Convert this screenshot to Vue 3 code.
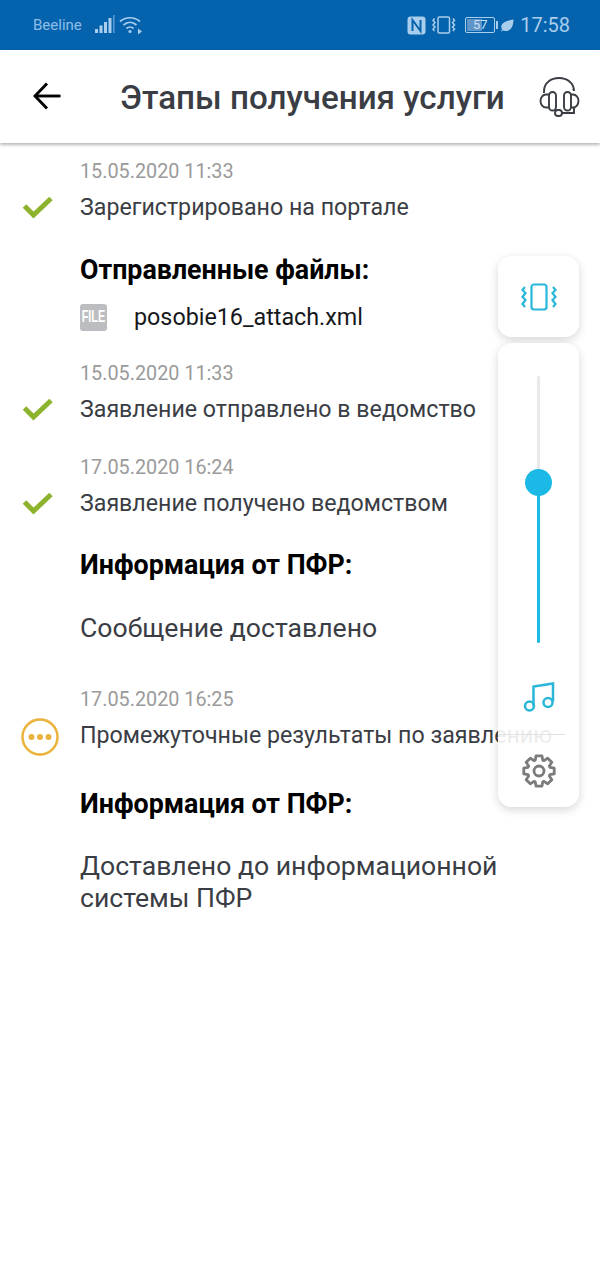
<script setup>
// Этапы получения услуги
const stagesFirst = [
  { date: '15.05.2020 11:33', text: 'Заявление отправлено в ведомство' },
  { date: '17.05.2020 16:24', text: 'Заявление получено ведомством' },
];

// шестерёнка с 8 зубцами
const gearPath = (() => {
  const pts = [];
  for (let i = 0; i < 8; i++) {
    const a = (i * Math.PI) / 4 - Math.PI / 2;
    const steps = [[-0.33, 11.5], [-0.19, 15.5], [0.19, 15.5], [0.33, 11.5]];
    for (const [d, r] of steps) {
      pts.push(`${(17 + r * Math.cos(a + d)).toFixed(2)} ${(17 + r * Math.sin(a + d)).toFixed(2)}`);
    }
  }
  return 'M' + pts.join('L') + 'Z';
})();
</script>

<template>
  <div class="page">
    <div class="statusbar">
      <div class="status-left">
        <span class="carrier">Beeline</span>
        <svg class="signal" width="20" height="20" viewBox="0 0 20 20">
          <rect x="0" y="14" width="3" height="4" fill="#a9cdec" />
          <rect x="4.5" y="10.5" width="3" height="7.5" fill="#a9cdec" />
          <rect x="9" y="7" width="3" height="11" fill="#a9cdec" />
          <rect x="13.5" y="3" width="3" height="15" fill="#a9cdec" />
          <rect x="18" y="0" width="1.5" height="18" fill="#5b9bd5" />
        </svg>
        <svg class="wifi" width="24" height="20" viewBox="0 0 24 20" fill="none" stroke="#a9cdec" stroke-width="1.7">
          <path d="M1 6.5C6.5 1.5 15.5 1.5 21 6.5" />
          <path d="M4.5 10C8.5 6.5 13.500 6.500 17.500 10" />
          <path d="M7.500 13.500C9.500 11.700 12.500 11.700 14.500 13.500" />
          <circle cx="11" cy="16.500" r="1.600" fill="#a9cdec" stroke="none" />
          <path d="M19 13.500L23 16.500L19 19.500Z" fill="#a9cdec" stroke="none" />
        </svg>
      </div>
      <div class="status-right">
        <svg width="19" height="19" viewBox="0 0 19 19">
          <rect x="0.500" y="0.500" width="18" height="18" rx="3" fill="#a9cdec" />
          <path d="M5.500 15V4L13.500 15V4" fill="none" stroke="#0563ad" stroke-width="2" />
        </svg>
        <svg class="vibrate" width="24" height="18" viewBox="0 0 24 18" fill="none" stroke="#a9cdec" stroke-width="1.500">
          <rect x="6" y="1" width="11.500" height="16" rx="1.500" />
          <path d="M2.500 2.500l-1.500 2 2 2-2 2.500 2 2-2 2 1.500 2" />
          <path d="M21 2.500l1.500 2-2 2 2 2.500-2 2 2 2-1.500 2" />
        </svg>
        <div class="battery">
          <div class="battery-body">
            <div class="battery-fill"></div>
            <span class="battery-text">57</span>
          </div>
          <div class="battery-cap"></div>
        </div>
        <svg class="leaf" width="13" height="13" viewBox="0 0 13 13">
          <path d="M12.500 0.500C12.500 7 10 12 4.500 12C3.300 12 2.400 11.700 1.800 11.200L0.800 12.500L0 12L1.100 10.500C0.300 9.500 0 8.300 0.500 6.500C1.500 3 6 1.500 12.500 0.500Z" fill="#a9cdec" />
        </svg>
        <span class="clock">17:58</span>
      </div>
    </div>

    <header class="topbar">
      <svg class="back" width="28" height="28" viewBox="0 0 28 28" fill="none" stroke="#000" stroke-width="2.900">
        <path d="M27.500 14H2" />
        <path d="M14 1.500L2 14L14 26.500" />
      </svg>
      <h1 class="title">Этапы получения услуги</h1>
      <svg class="support" width="42" height="42" viewBox="0 0 42 42" fill="none" stroke="#3a3d44" stroke-width="1.900">
        <path d="M5 16V14C5 6 12 1 20 1C28 1 35 6 35 14" />
        <circle cx="34" cy="12.500" r="0.700" fill="#3a3d44" stroke="none" />
        <path d="M10 17.500H7A5.500 6.500 0 0 0 7 30.500H10" />
        <rect x="10" y="15" width="7" height="18.500" rx="3.500" />
        <rect x="25" y="15" width="7" height="18.500" rx="3.500" />
        <path d="M32 17.500H34A5.500 6.500 0 0 1 34 30.500H32" />
        <path d="M35 30.500V36H23" />
        <rect x="16" y="33" width="7" height="6" rx="3" />
      </svg>
    </header>

    <main class="content">
      <section class="stage">
        <div class="date">15.05.2020 11:33</div>
        <div class="row">
          <svg class="check" width="32" height="24" viewBox="0 0 32 24" fill="none" stroke="#8db32d" stroke-width="5">
            <path d="M2.500 11L11.500 20L29 3.500" />
          </svg>
          <span class="status">Зарегистрировано на портале</span>
        </div>
      </section>

      <section class="block files">
        <h2 class="block-title">Отправленные файлы:</h2>
        <div class="file">
          <div class="file-icon"><span>FILE</span></div>
          <span class="file-name">posobie16_attach.xml</span>
        </div>
      </section>

      <section v-for="s in stagesFirst" :key="s.date" class="stage stage-next">
        <div class="date">{{ s.date }}</div>
        <div class="row">
          <svg class="check" width="32" height="24" viewBox="0 0 32 24" fill="none" stroke="#8db32d" stroke-width="5">
            <path d="M2.500 11L11.500 20L29 3.500" />
          </svg>
          <span class="status">{{ s.text }}</span>
        </div>
      </section>

      <section class="block info-one">
        <h2 class="block-title">Информация от ПФР:</h2>
        <p class="info-text">Сообщение доставлено</p>
      </section>

      <section class="stage stage-pending">
        <div class="date">17.05.2020 16:25</div>
        <div class="row">
          <svg class="pending" width="38" height="38" viewBox="0 0 38 38">
            <circle cx="19" cy="19" r="17.500" fill="none" stroke="#ebb33c" stroke-width="2.500" />
            <circle cx="10.500" cy="19" r="3" fill="#ebb33c" />
            <circle cx="19" cy="19" r="3" fill="#ebb33c" />
            <circle cx="27.500" cy="19" r="3" fill="#ebb33c" />
          </svg>
          <span class="status">Промежуточные результаты по заявлению</span>
        </div>
      </section>

      <section class="block info-two">
        <h2 class="block-title">Информация от ПФР:</h2>
        <p class="info-text">Доставлено до информационной системы ПФР</p>
      </section>
    </main>

    <!-- громкость: системная панель поверх экрана -->
    <aside class="volume">
      <div class="vol-card vol-mode">
        <svg width="36" height="28" viewBox="0 0 36 28" fill="none" stroke="#29b6d8" stroke-width="2.200">
          <rect x="10.500" y="1.500" width="15" height="25" rx="2.500" />
          <path d="M4 4l-2.500 3 3 3-3 4 3 3-3 4 2.500 3" />
          <path d="M32 4l2.500 3-3 3 3 4-3 3 3 4-2.500 3" />
        </svg>
      </div>
      <div class="vol-card vol-main">
        <div class="slider">
          <div class="track"></div>
          <div class="track-active"></div>
          <div class="thumb"></div>
        </div>
        <svg class="music" width="32" height="32" viewBox="0 0 32 32" fill="none" stroke="#29b6d8" stroke-width="2.500">
          <path d="M10.500 26V6.500L30 3.500V21.500" />
          <circle cx="6.500" cy="26" r="4.500" />
          <circle cx="25" cy="22.500" r="4.500" />
        </svg>
        <div class="vol-divider"></div>
        <svg class="gear" width="34" height="34" viewBox="0 0 34 34" fill="none" stroke="#7b7b7b" stroke-width="2.800" stroke-linejoin="round">
          <path :d="gearPath" />
          <circle cx="17" cy="17" r="5" />
        </svg>
      </div>
    </aside>
  </div>
</template>

<style>
html, body {
  margin: 0;
  background: #fff;
}
</style>

<style scoped>
.page {
  position: relative;
  width: 600px;
  height: 1266px;
  overflow: hidden;
  background: #fff;
  font-family: Roboto, "Noto Sans", sans-serif;
  color: #3a3d44;
}

.statusbar {
  height: 50px;
  background: #0563ad;
  display: flex;
  justify-content: space-between;
  align-items: center;
  padding: 0 30px 0 33px;
}

.status-left, .status-right {
  display: flex;
  align-items: center;
}

.carrier {
  font-size: 15px;
  color: #8fbde6;
  margin-right: 13px;
}

.signal {
  margin-right: 4px;
}

.status-right svg {
  flex: none;
}

.vibrate {
  margin-left: 6px;
}

.battery {
  display: flex;
  align-items: center;
  margin-left: 9px;
}

.battery-body {
  position: relative;
  width: 28px;
  height: 14px;
  border: 1px solid #a9cdec;
  border-radius: 2px;
}

.battery-fill {
  position: absolute;
  left: 1px;
  top: 1px;
  bottom: 1px;
  width: 15px;
  background: #5f95c9;
}

.battery-text {
  position: absolute;
  left: 0;
  right: 0;
  top: 0;
  text-align: center;
  font-size: 13px;
  line-height: 14px;
  color: #c9e0f4;
}

.battery-cap {
  width: 2px;
  height: 8px;
  margin-left: 1px;
  background: #a9cdec;
}

.leaf {
  margin-left: 3px;
}

.clock {
  font-size: 20px;
  color: #a9cdec;
  margin-left: 6px;
}

.topbar {
  height: 93px;
  box-sizing: border-box;
  display: flex;
  align-items: center;
  padding: 0 19px 0 33px;
  background: #fff;
  box-shadow: 0 2px 3px rgba(0, 0, 0, 0.28);
}

.back {
  flex: none;
  margin-top: -1px;
}

.title {
  flex: 1;
  margin: 2px 0 0 59px;
  font-size: 33.200px;
  font-weight: 500;
  color: #3a3d44;
  white-space: nowrap;
}

.support {
  flex: none;
  margin-top: 3px;
}

.content {
  padding-top: 16px;
}

.stage {
  padding-left: 80px;
}

.date {
  font-size: 19.800px;
  line-height: 26px;
  color: #9a9a9a;
}

.row {
  position: relative;
  margin-top: 8px;
}

.status {
  display: block;
  font-size: 23.200px;
  line-height: 28px;
  color: #3a3d44;
  white-space: nowrap;
}

.check {
  position: absolute;
  left: -58px;
  top: 2px;
}

.pending {
  position: absolute;
  left: -59px;
  top: -3px;
}

.block {
  padding-left: 80px;
}

.files {
  margin-top: 33px;
}

.block-title {
  margin: 0;
  font-size: 26.800px;
  line-height: 32px;
  font-weight: 700;
  color: #000;
}

.file {
  display: flex;
  align-items: center;
  margin-top: 16px;
  height: 30px;
}

.file-icon {
  width: 27px;
  height: 27px;
  border-radius: 3px;
  background: #bcbdc0;
  color: #fff;
  display: flex;
  align-items: center;
  justify-content: center;
  font-family: "Liberation Sans", sans-serif;
  font-size: 17px;
  font-weight: 700;
  overflow: hidden;
}

.file-icon span {
  display: inline-block;
  transform: scaleX(0.64);
}

.file-name {
  margin-left: 27px;
  font-size: 23.300px;
  color: #17181b;
}

.stage-next {
  margin-top: 29px;
}

.stage-next + .stage-next {
  margin-top: 32px;
}

.info-one {
  margin-top: 32px;
}

.info-text {
  margin: 0;
  font-size: 26.600px;
  line-height: 32px;
  color: #3a3d44;
}

.info-one .info-text {
  margin-top: 31px;
}

.stage-pending {
  margin-top: 43px;
}

.info-two {
  margin-top: 39px;
}

.info-two .info-text {
  margin-top: 30px;
  width: 440px;
}

.volume {
  position: absolute;
  left: 498px;
  top: 256px;
  width: 81px;
}

.vol-card {
  background: rgba(255, 255, 255, 0.9);
  border-radius: 14px;
  box-shadow: 0 3px 10px rgba(0, 0, 0, 0.16);
}

.vol-mode {
  height: 81px;
  display: flex;
  align-items: center;
  justify-content: center;
}

.vol-main {
  position: relative;
  margin-top: 6px;
  height: 464px;
  display: flex;
  flex-direction: column;
  align-items: center;
  box-sizing: border-box;
  padding-top: 33px;
}

.slider {
  position: relative;
  width: 27px;
  height: 267px;
}

.track, .track-active {
  position: absolute;
  left: 12px;
  width: 3px;
  border-radius: 2px;
}

.track {
  top: 0;
  bottom: 0;
  background: #e9e9e9;
}

.track-active {
  top: 107px;
  bottom: 0;
  background: #1bbae6;
}

.thumb {
  position: absolute;
  left: 0;
  top: 93px;
  width: 27px;
  height: 27px;
  border-radius: 50%;
  background: #1bbae6;
}

.music {
  margin-top: 37px;
}

.vol-divider {
  align-self: stretch;
  margin: 22px 14px 0 0;
  height: 1px;
  background: #e2e2e2;
}

.gear {
  margin-top: 19px;
}
</style>
